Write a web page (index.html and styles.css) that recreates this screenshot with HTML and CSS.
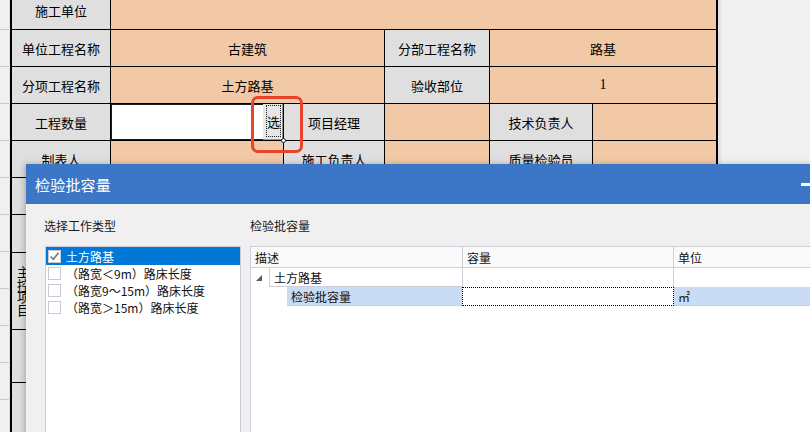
FILE: index.html
```html
<!DOCTYPE html>
<html lang="zh-CN">
<head>
<meta charset="utf-8">
<title>检验批容量</title>
<link rel="stylesheet" href="styles.css">
</head>
<body>
<div class="screen">
  <div class="side"></div>
  <div class="sheet">
    <div class="c lab">施工单位</div>
    <div class="c val s5"></div>

    <div class="c lab">单位工程名称</div>
    <div class="c val s2">古建筑</div>
    <div class="c lab">分部工程名称</div>
    <div class="c val s2">路基</div>

    <div class="c lab">分项工程名称</div>
    <div class="c val s2">土方路基</div>
    <div class="c lab">验收部位</div>
    <div class="c val s2 num">1</div>

    <div class="c lab">工程数量</div>
    <div class="c input"><div class="pick"><span>选</span></div><i class="grip"></i></div>
    <div class="c lab">项目经理</div>
    <div class="c val"></div>
    <div class="c lab">技术负责人</div>
    <div class="c val"></div>

    <div class="c lab">制表人</div>
    <div class="c val"></div>
    <div class="c lab">施工负责人</div>
    <div class="c val"></div>
    <div class="c lab">质量检验员</div>
    <div class="c val"></div>

    <div class="c lab"></div>
    <div class="c val s5"></div>
    <div class="c lab"></div>
    <div class="c val s5"></div>
    <div class="c lab vert"><span>主控项目</span></div>
    <div class="c val s5"></div>
    <div class="c lab"></div>
    <div class="c val s5"></div>
    <div class="c lab"></div>
    <div class="c val s5"></div>
  </div>
  <div class="rest"></div>

  <div class="callout"></div>

  <section class="dialog">
    <header class="titlebar">
      <span class="title">检验批容量</span>
      <span class="min"></span>
    </header>
    <div class="dbody">
      <div class="pane-left">
        <div class="plabel">选择工作类型</div>
        <ul class="list">
          <li class="item selected"><span class="box"><svg width="11" height="11" viewBox="0 0 11 11"><path d="M1.5 5.5 L4.3 8.3 L9.5 1.8" fill="none" stroke="#777" stroke-width="1.6"/></svg></span>土方路基</li>
          <li class="item"><span class="box"></span>（路宽＜9m）路床长度</li>
          <li class="item"><span class="box"></span>（路宽9～15m）路床长度</li>
          <li class="item"><span class="box"></span>（路宽＞15m）路床长度</li>
        </ul>
      </div>
      <div class="pane-right">
        <div class="plabel">检验批容量</div>
        <div class="grid">
          <div class="row head">
            <div class="g c1">描述</div>
            <div class="g c2">容量</div>
            <div class="g c3">单位</div>
          </div>
          <div class="row r1">
            <div class="indent1"><svg width="6" height="6" viewBox="0 0 6 6"><polygon points="6,0 6,6 0,6" fill="#5a5a5a"/></svg></div>
            <div class="g desc">土方路基</div>
            <div class="g c2 plain"></div>
            <div class="g c3 plain"></div>
          </div>
          <div class="row r2">
            <div class="indent2"></div>
            <div class="g sel">检验批容量</div>
            <div class="g edit"></div>
            <div class="g unit">㎡</div>
          </div>
        </div>
      </div>
    </div>
  </section>
</div>
</body>
</html>
```

FILE: styles.css
```css
* { box-sizing: border-box; margin: 0; padding: 0; }
html, body { width: 810px; height: 432px; overflow: hidden; background: #f0f0f0; }
body { font-family: "Noto Sans CJK SC", "Noto Sans", sans-serif; color: #000; }

.screen { position: relative; width: 810px; height: 432px; display: flex; align-items: flex-start; overflow: hidden; }

.side {
  width: 10px; height: 432px; flex: none;
  background: repeating-linear-gradient(to bottom, transparent 0 29px, #c9c9c9 29px 30px, transparent 30px 37px);
  border-right: 1px solid #e2e2e2;
}

.sheet {
  flex: none;
  width: 708px;
  margin-top: -8px;
  display: grid;
  grid-template-columns: 98px 172px 100px 104px 102px 123px;
  grid-template-rows: 37px 36px 36px 36px 36px 36px 37px 76px 52px 60px;
  gap: 1px;
  background: #000;
  border-left: 2px solid #000;
  border-right: 2px solid #000;
  box-shadow: 3px 0 2px rgba(0,0,0,0.06);
}
.c { display: flex; align-items: center; justify-content: center; font-size: 13px; white-space: nowrap; }
.lab { background: #dfdfdf; }
.val { background: #f1c9a6; }
.s2 { grid-column: span 2; }
.s5 { grid-column: span 5; }
.num { font-family: "Liberation Serif", serif; font-size: 14px; }
.vert { justify-content: flex-start; padding-left: 5px; }
.vert span { width: 13px; white-space: normal; word-break: break-all; line-height: 12.5px; }

.input { background: #fff; justify-content: flex-end; align-items: stretch; position: relative; box-shadow: inset 1px 1px 0 #1b1b2b, inset -1px -1px 0 #1b1b2b; }
.pick { width: 20px; background: #e7e7e7; border-right: 1px solid #9a9a9a; border-bottom: 1px solid #9a9a9a; display: flex; padding: 1px 2px 2px 3px; }
.pick span { flex: 1; border: 1px dotted #222; display: flex; align-items: center; justify-content: center; font-size: 13px; }
.grip { position: absolute; right: -3px; bottom: -3px; width: 5px; height: 5px; border: 1px solid #222; background: #fff; border-radius: 50%; }

.rest { flex: 1; height: 432px; }

.callout {
  position: absolute; left: 251px; top: 96px; width: 52px; height: 57px;
  border: 3px solid #e8432b; border-radius: 7px;
}

.dialog {
  position: absolute; left: 26px; top: 164px; width: 800px; height: 290px;
  background: #f0f0f0;
  box-shadow: -2px 0 6px rgba(0,0,0,0.22);
}
.titlebar { height: 40px; background: #3b77c6; color: #fff; display: flex; align-items: center; justify-content: space-between; padding-left: 9px; }
.title { font-size: 15px; letter-spacing: 0.2px; }
.min { width: 14px; height: 3px; background: #fff; margin-right: 11px; margin-top: 1px; }

.dbody { display: flex; gap: 9px; padding: 13px 0 0 18px; }
.plabel { font-size: 12px; line-height: 17px; height: 17px; margin-bottom: 12px; color: #1a1a1a; }
.pane-left { width: 197px; flex: none; }
.list { list-style: none; margin-left: 1px; width: 196px; height: 200px; background: #fff; border: 1px solid #cacad6; }
.item { height: 17px; display: flex; align-items: center; padding-left: 2px; font-size: 12px; white-space: nowrap; color: #111; }
.item.selected { height: 18px; background: #0078d7; color: #fff; }
.box { width: 13px; height: 13px; border: 1px solid #c9c9d9; background: #fff; margin-right: 5px; display: flex; align-items: center; justify-content: center; flex: none; }

.pane-right { flex: 1; }
.grid { width: 600px; height: 200px; background: #fff; border-top: 1px solid #cfcfdc; border-left: 1px solid #cfcfdc; }
.row { display: flex; }
.g { font-size: 12px; display: flex; align-items: center; padding-left: 4px; white-space: nowrap; color: #111; }
.head { height: 21px; background: #fafafa; border-bottom: 1px solid #cfcfdc; }
.head .g { height: 20px; }
.c1 { width: 212px; border-right: 1px solid #cfcfdc; }
.c2 { width: 211px; border-right: 1px solid #cfcfdc; }
.c3 { flex: 1; }
.r1 { height: 19px; }
.indent1 { width: 18px; height: 19px; display: flex; align-items: center; padding-left: 5px; }
.desc { width: 194px; height: 19px; border-left: 1px solid #cfcfdc; border-right: 1px solid #cfcfdc; border-bottom: 1px solid #cfcfdc; }
.plain { height: 19px; }
.r2 { height: 19px; }
.indent2 { width: 36px; height: 19px; }
.sel { width: 175px; height: 19px; background: #c9dcf3; border-bottom: 1px solid #cfcfdc; }
.edit { width: 212px; height: 19px; background: #fff; border: 1px dotted #000; }
.unit { flex: 1; height: 19px; background: #c9dcf3; border-bottom: 1px solid #cfcfdc; padding-left: 4px; font-size: 12px; }
```
